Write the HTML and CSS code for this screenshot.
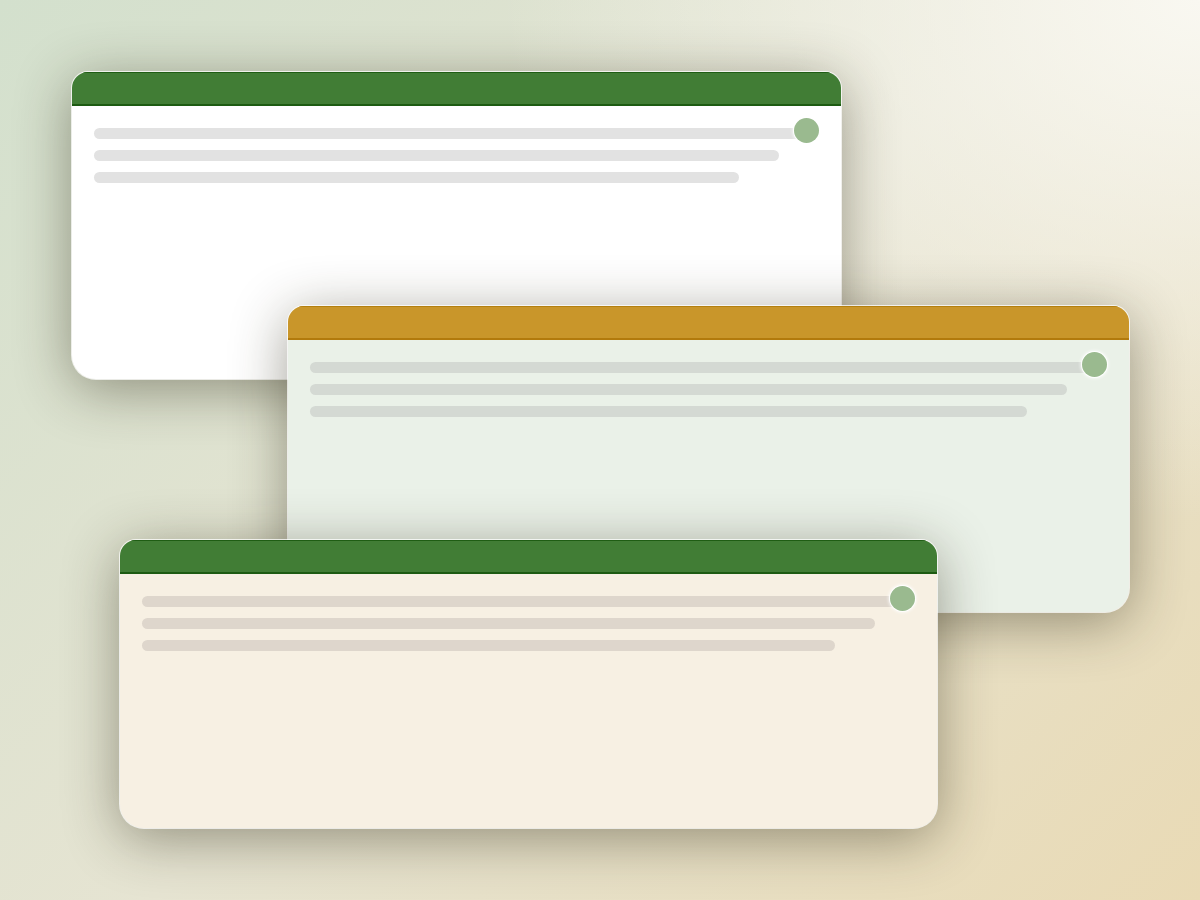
FILE: index.html
```html
<!DOCTYPE html>
<html lang="en">
<head>
<meta charset="utf-8">
<title>Cards</title>
<link rel="stylesheet" href="styles.css">
</head>
<body>
<div class="canvas">
  <div class="card card-a">
    <div class="card-head head-green"></div>
    <div class="card-body">
      <div class="line line-1"></div>
      <div class="line line-2"></div>
      <div class="line line-3"></div>
      <span class="dot"></span>
    </div>
  </div>
  <div class="card card-b">
    <div class="card-head head-gold"></div>
    <div class="card-body">
      <div class="line line-1"></div>
      <div class="line line-2"></div>
      <div class="line line-3"></div>
      <span class="dot"></span>
    </div>
  </div>
  <div class="card card-c">
    <div class="card-head head-green"></div>
    <div class="card-body">
      <div class="line line-1"></div>
      <div class="line line-2"></div>
      <div class="line line-3"></div>
      <span class="dot"></span>
    </div>
  </div>
</div>
</body>
</html>
```
FILE: styles.css
```css
html, body {
  margin: 0;
  padding: 0;
  width: 1200px;
  height: 900px;
  overflow: hidden;
  font-family: "Liberation Sans", Arial, sans-serif;
}

.canvas {
  position: relative;
  width: 1200px;
  height: 900px;
  background:
    radial-gradient(ellipse 700px 520px at 100% 0%, rgba(250, 249, 243, 0.95) 0%, rgba(250, 249, 243, 0) 100%),
    linear-gradient(135deg, #d3e0cd 0%, #e6e4d2 50%, #e9dab5 100%);
}

.card {
  position: absolute;
  display: flex;
  flex-direction: column;
  border-radius: 16px 16px 24px 24px;
  overflow: hidden;
  box-shadow:
    0 0 0 1px rgba(255, 255, 255, 0.75),
    0 10px 55px rgba(45, 40, 20, 0.45);
}

.card-a {
  left: 72px;
  top: 72px;
  width: 769px;
  height: 307px;
  background: #ffffff;
}

.card-b {
  left: 288px;
  top: 306px;
  width: 841px;
  height: 306px;
  background: #eaf1e8;
}

.card-c {
  left: 120px;
  top: 540px;
  width: 817px;
  height: 288px;
  background: #f7f0e3;
}

.card-head {
  height: 32px;
  flex: none;
}

.head-green {
  background: #417d35;
  border-bottom: 2px solid #1d5b12;
  box-shadow: inset 0 1px 0 #1f5d14;
}

.head-gold {
  background: #c9962a;
  border-bottom: 2px solid #b27a0c;
  box-shadow: inset 0 1px 0 #b4800f;
}

.card-body {
  position: relative;
  flex: 1;
  display: flex;
  flex-direction: column;
  gap: 11px;
  padding: 22px 22px 0 22px;
}

.line {
  height: 11px;
  border-radius: 6px;
  background: #e2e2e2;
}

.card-b .line { background: #d4d9d3; }
.card-c .line { background: #ded6cc; }

.line-1 { width: 100%; }
.line-2 { width: calc(100% - 40px); }
.line-3 { width: calc(100% - 80px); }

.dot {
  position: absolute;
  top: 12px;
  right: 22px;
  width: 25px;
  height: 25px;
  border-radius: 50%;
  background: #9aba8f;
  box-shadow: 0 0 0 1px rgba(255, 255, 255, 0.9), 0 0 3px 2px rgba(255, 255, 255, 0.6);
}
```
